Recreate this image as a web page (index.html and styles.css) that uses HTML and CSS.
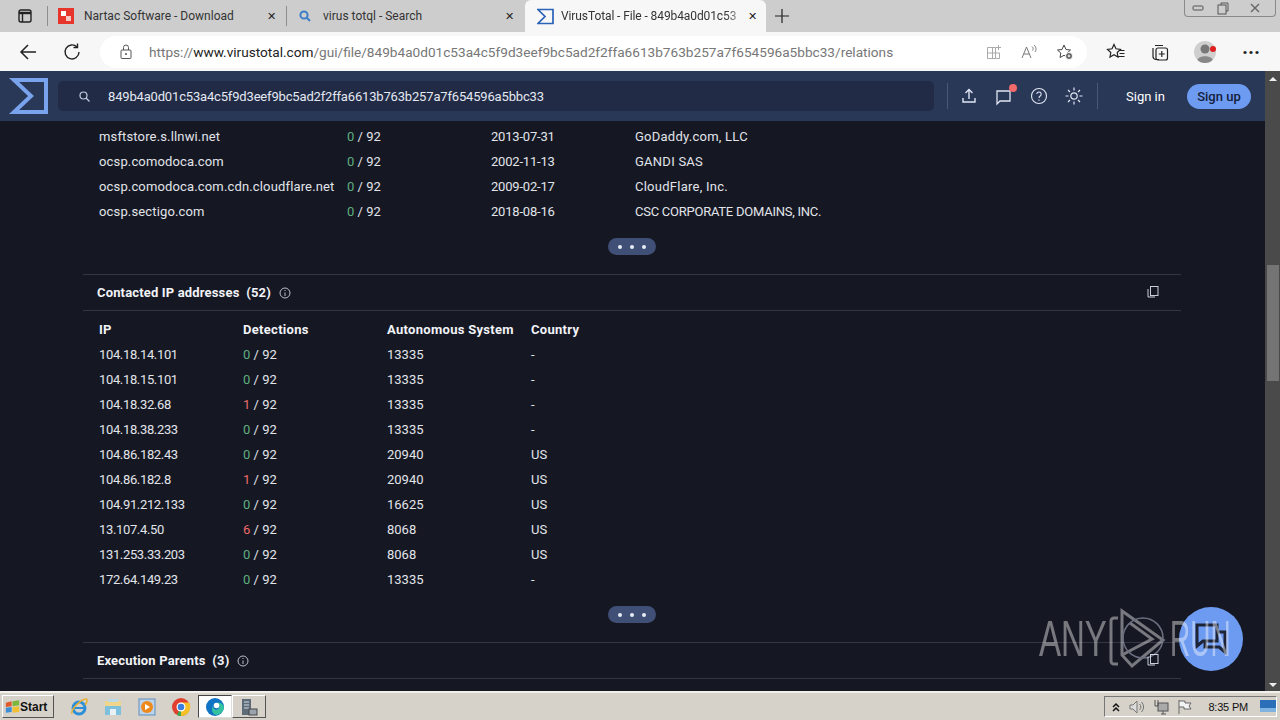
FILE: index.html
```html
<!DOCTYPE html>
<html lang="en">
<head>
    <meta charset="UTF-8">
    <title>VirusTotal - File</title>
    <link rel="stylesheet" href="styles.css">
</head>
<body>

    <!-- browser tabs -->
    <div class="tab-strip">
        <svg class="tab-actions" width="16" height="16" viewBox="0 0 16 16" fill="none" stroke="#222" stroke-width="1.4"><rect x="2" y="2" width="12" height="12" rx="2"/><path d="M2 5h12" stroke-width="2.4"/><path d="M5.5 4v10"/></svg>
        <div class="tab-sep"></div>
        <div class="tab">
            <svg width="16" height="16" viewBox="0 0 16 16"><rect width="16" height="16" fill="#e8352b"/><rect x="3" y="3" width="5" height="5" fill="#fff"/><rect x="8" y="8" width="5" height="5" fill="#f7c9c4"/></svg>
            <span class="tab-title">Nartac Software - Download</span>
            <span class="tab-close">&#10005;</span>
        </div>
        <div class="tab-sep"></div>
        <div class="tab tab-search">
            <svg width="16" height="16" viewBox="0 0 16 16" fill="none" stroke="#3a7fc8" stroke-width="2"><circle cx="7" cy="7" r="3.6"/><path d="M9.8 9.8 13 13"/></svg>
            <span class="tab-title">virus totql - Search</span>
            <span class="tab-close">&#10005;</span>
        </div>
        <div class="tab tab-active">
            <svg width="17" height="17" viewBox="0 0 34 34" fill="none" stroke="#2a62b8" stroke-width="3.4"><path d="M2 3h30v28H2l14-14z"/></svg>
            <span class="tab-title">VirusTotal - File - 849b4a0d01c53</span>
            <span class="tab-close">&#10005;</span>
        </div>
        <svg class="new-tab" width="16" height="16" viewBox="0 0 16 16" stroke="#222" stroke-width="1.2"><path d="M8 1v14M1 8h14"/></svg>
        <div class="window-buttons">
            <span class="win-btn"><svg width="12" height="8" viewBox="0 0 12 8" fill="none" stroke="#555"><rect x="1" y="2" width="10" height="4" rx="1"/></svg></span>
            <span class="win-btn"><svg width="14" height="13" viewBox="0 0 14 13" fill="none" stroke="#555"><rect x="2" y="3" width="8" height="9"/><path d="M5 3V1h7v8h-2"/></svg></span>
            <span class="win-btn win-close"><svg width="14" height="10" viewBox="0 0 14 10" fill="none" stroke="#666" stroke-width="1.4"><path d="M3 1l8 8M11 1 3 9"/></svg></span>
        </div>
    </div>

    <!-- address bar -->
    <div class="toolbar">
        <svg class="tool-icon" width="20" height="20" viewBox="0 0 20 20" fill="none" stroke="#222" stroke-width="1.5"><path d="M18 10H3M10 3l-7 7 7 7"/></svg>
        <svg class="tool-icon tool-reload" width="20" height="20" viewBox="0 0 20 20" fill="none" stroke="#222" stroke-width="1.4"><path d="M15 5a7 7 0 1 0 2 5"/><path d="M15.5 1.5V5.5h-4"/></svg>
        <div class="address">
            <svg width="14" height="16" viewBox="0 0 14 16" fill="none" stroke="#555"><rect x="2" y="6" width="10" height="8.5" rx="1"/><path d="M4.5 6V3.5a2.5 2.5 0 0 1 5 0V6"/><circle cx="7" cy="10" r=".6" fill="#555"/></svg>
            <span class="url">https://<b>www.virustotal.com</b>/gui/file/849b4a0d01c53a4c5f9d3eef9bc5ad2f2ffa6613b763b257a7f654596a5bbc33/relations</span>
            <svg class="addr-icon" width="16" height="16" viewBox="0 0 16 16" fill="none" stroke="#aaa"><path d="M1.5 3.5h8v11h-8zM6.5 3.5v11M1.5 9h12v5.5h-4M12.5 1v5M10 3.5h5"/></svg>
            <svg class="addr-icon" width="18" height="16" viewBox="0 0 18 16" fill="none" stroke="#777"><path d="M2 14 6.5 3 11 14M3.8 10h5.4M12 2.5c1.5 1 1.5 3 .5 4M14 1c2.5 2 2.5 5 1 7"/></svg>
            <svg class="addr-icon" width="18" height="18" viewBox="0 0 18 18" fill="none" stroke="#444"><path d="M8 2l2 4.5 4.5.5-3.3 3 .8 4.5L8 12.3 4 14.500 4.800 10 1.500 7 6 6.500z"/><circle cx="13" cy="13" r="3.5" fill="#555" stroke="#fff"/><path d="M11.5 13h3M13 11.5v3" stroke="#fff"/></svg>
        </div>
        <svg class="tool-icon" width="20" height="20" viewBox="0 0 20 20" fill="none" stroke="#222" stroke-width="1.2"><path d="M8 2.5l2 4.3 4.5.6-3.3 3.100.8 4.500-4-2.200-4 2.200.8-4.500L1.500 7.400 6 6.800zM13 8.500h5.500M13.500 11.500h5M12.500 14.500h6"/></svg>
        <svg class="tool-icon" width="20" height="20" viewBox="0 0 20 20" fill="none" stroke="#222" stroke-width="1.2"><rect x="6" y="6" width="11.5" height="12" rx="2"/><path d="M9 17.5H6a3 3 0 0 1-3-3V6M5 3.5h8M11.8 9v6M8.8 12h6"/></svg>
        <svg class="tool-icon" width="24" height="24" viewBox="0 0 24 24"><circle cx="11" cy="12" r="11" fill="#cfcfcf"/><circle cx="11" cy="9" r="4.5" fill="#777"/><path d="M3.5 20c1-5 14-5 15 0-3 4-12 4-15 0z" fill="#888"/><circle cx="19" cy="9" r="3" fill="#e02020"/></svg>
        <span class="tool-more">&middot;&middot;&middot;</span>
    </div>

    <!-- virustotal header and page -->
    <div class="viewport">
        <div class="page">
            <header class="vt-header">
                <svg class="vt-logo" width="40" height="36" viewBox="0 0 40 36" fill="none" stroke="#7aa3ee" stroke-width="4"><path d="M5 2h32v32H5l17-16z"/></svg>
                <div class="vt-search">
                    <svg width="13" height="13" viewBox="0 0 13 13" fill="none" stroke="#c3cbdd" stroke-width="1.2"><circle cx="5.5" cy="5.5" r="3.5"/><path d="M8 8l3.5 3.5"/></svg>
                    <span>849b4a0d01c53a4c5f9d3eef9bc5ad2f2ffa6613b763b257a7f654596a5bbc33</span>
                </div>
                <div class="vt-divider"></div>
                <div class="vt-icons">
                    <svg width="18" height="18" viewBox="0 0 18 18" fill="none" stroke="#dfe5f2" stroke-width="1.4"><path d="M9 12V3M5.5 6 9 2.5 12.5 6M3 11v4h12v-4"/></svg>
                    <span class="vt-chat">
                        <svg width="20" height="20" viewBox="0 0 20 20" fill="none" stroke="#dfe5f2" stroke-width="1.3"><path d="M3 5h13v10H6l-3 3z"/></svg>
                        <i class="vt-dot"></i>
                    </span>
                    <svg width="18" height="18" viewBox="0 0 18 18" fill="none" stroke="#dfe5f2" stroke-width="1.1"><circle cx="9" cy="9" r="7.5"/><path d="M6.8 7a2.2 2.2 0 1 1 3.4 2c-.8.5-1.200 1-1.200 2M9 12.500v1.200"/></svg>
                    <svg width="20" height="20" viewBox="0 0 20 20" fill="none" stroke="#dfe5f2" stroke-width="1.2"><circle cx="10" cy="10" r="3.2"/><path d="M10 1.500v3M10 15.500v3M1.500 10h3M15.500 10h3M4 4l2 2M14 14l2 2M16 4l-2 2M6 14l-2 2"/></svg>
                </div>
                <div class="vt-divider"></div>
                <span class="vt-signin">Sign in</span>
                <span class="vt-signup">Sign up</span>
            </header>

            <main class="content">
                <div class="table domains">
                    <div class="row"><span>msftstore.s.llnwi.net</span><span><em class="ok">0</em> / 92</span><span>2013-07-31</span><span>GoDaddy.com, LLC</span></div>
                    <div class="row"><span>ocsp.comodoca.com</span><span><em class="ok">0</em> / 92</span><span>2002-11-13</span><span>GANDI SAS</span></div>
                    <div class="row"><span>ocsp.comodoca.com.cdn.cloudflare.net</span><span><em class="ok">0</em> / 92</span><span>2009-02-17</span><span>CloudFlare, Inc.</span></div>
                    <div class="row"><span>ocsp.sectigo.com</span><span><em class="ok">0</em> / 92</span><span>2018-08-16</span><span class="caps">CSC CORPORATE DOMAINS, INC.</span></div>
                </div>
                <div class="more"><span class="more-pill"><i></i><i></i><i></i></span></div>

                <section class="section-head">
                    <h2>Contacted IP addresses&nbsp; (52)</h2>
                    <svg class="info" width="12" height="12" viewBox="0 0 12 12" fill="none" stroke="#b9bfcc"><circle cx="6" cy="6" r="5"/><path d="M6 5.5V9M6 3v1"/></svg>
                    <svg class="copy" width="12" height="12" viewBox="0 0 12 12" fill="none" stroke="#c9cedb"><rect x="3.5" y=".5" width="7.5" height="9"/><path d="M1 3v8h7"/></svg>
                </section>
                <div class="table ips">
                    <div class="row row-head"><span>IP</span><span>Detections</span><span>Autonomous System</span><span>Country</span></div>
                    <div class="row"><span>104.18.14.101</span><span><em class="ok">0</em> / 92</span><span>13335</span><span>-</span></div>
                    <div class="row"><span>104.18.15.101</span><span><em class="ok">0</em> / 92</span><span>13335</span><span>-</span></div>
                    <div class="row"><span>104.18.32.68</span><span><em class="bad">1</em> / 92</span><span>13335</span><span>-</span></div>
                    <div class="row"><span>104.18.38.233</span><span><em class="ok">0</em> / 92</span><span>13335</span><span>-</span></div>
                    <div class="row"><span>104.86.182.43</span><span><em class="ok">0</em> / 92</span><span>20940</span><span>US</span></div>
                    <div class="row"><span>104.86.182.8</span><span><em class="bad">1</em> / 92</span><span>20940</span><span>US</span></div>
                    <div class="row"><span>104.91.212.133</span><span><em class="ok">0</em> / 92</span><span>16625</span><span>US</span></div>
                    <div class="row"><span>13.107.4.50</span><span><em class="bad">6</em> / 92</span><span>8068</span><span>US</span></div>
                    <div class="row"><span>131.253.33.203</span><span><em class="ok">0</em> / 92</span><span>8068</span><span>US</span></div>
                    <div class="row"><span>172.64.149.23</span><span><em class="ok">0</em> / 92</span><span>13335</span><span>-</span></div>
                </div>
                <div class="more"><span class="more-pill"><i></i><i></i><i></i></span></div>

                <section class="section-head">
                    <h2>Execution Parents&nbsp; (3)</h2>
                    <svg class="info" width="12" height="12" viewBox="0 0 12 12" fill="none" stroke="#b9bfcc"><circle cx="6" cy="6" r="5"/><path d="M6 5.5V9M6 3v1"/></svg>
                    <svg class="copy" width="12" height="12" viewBox="0 0 12 12" fill="none" stroke="#c9cedb"><rect x="3.5" y=".5" width="7.5" height="9"/><path d="M1 3v8h7"/></svg>
                </section>
            </main>
        </div>

        <div class="scrollbar">
            <span class="arrow-up"></span>
            <div class="scroll-thumb"></div>
            <span class="arrow-down"></span>
        </div>

        <!-- chat bubble and recorder watermark sit over the page -->
        <div class="chat-bubble">
            <svg width="36" height="34" viewBox="0 0 36 34" fill="none" stroke="#1d2436" stroke-width="3"><path d="M4 3h20v16H10l-6 5z"/><path d="M24 10h8v20l-6-5H12v-6"/></svg>
        </div>
        <div class="watermark">
            <span class="wm-any">ANY</span>
            <svg class="wm-logo" width="58" height="66" viewBox="0 0 58 66" fill="none" stroke="#fff" stroke-width="3"><path d="M10 12H6a3 3 0 0 0-3 3v40a3 3 0 0 0 3 3h4"/><path d="M14 5v44l10 11 31-26z"/><path d="M14 49l30-16-22-16"/><circle cx="35" cy="32" r="20" stroke="#dfe6ff" stroke-width="1.5"/></svg>
            <span class="wm-run">RUN</span>
        </div>
    </div>

    <!-- windows taskbar -->
    <footer class="taskbar">
        <div class="start">
            <svg width="15" height="14" viewBox="0 0 18 16"><path d="M1 3l7-2v6l-7 1z" fill="#e2582a"/><path d="M9 1l8-1v6l-8 1z" fill="#7db63c"/><path d="M1 9l7-1v6l-7 1z" fill="#3c8ed6"/><path d="M9 8l8-1v7l-8 1z" fill="#f0c030"/></svg>
            <span>Start</span>
        </div>
        <div class="task-icon">
            <svg width="20" height="20" viewBox="0 0 20 20" fill="none"><circle cx="10" cy="11" r="6" stroke="#2d8fd8" stroke-width="3"/><path d="M5 11h10" stroke="#2d8fd8" stroke-width="2"/><path d="M3 17C1 13 12 2 17 2c2 0 1 4-1 6" stroke="#e8b030" stroke-width="1.5"/></svg>
        </div>
        <div class="task-icon">
            <svg width="20" height="20" viewBox="0 0 20 20"><path d="M2 4h16v14H2z" fill="#f0d58a"/><path d="M2 9h16v9H2z" fill="#7fc0dc"/><path d="M7 12h6v6H7z" fill="#e8f2f6"/><path d="M5 2h10v3H5z" fill="#bcd9e6"/></svg>
        </div>
        <div class="task-icon">
            <svg width="20" height="20" viewBox="0 0 20 20"><rect x="2" y="2" width="16" height="16" fill="#bcd3ea" stroke="#5f8fc0"/><circle cx="10" cy="10" r="6" fill="#ee8a1d"/><path d="M8 7l5 3-5 3z" fill="#fff"/></svg>
        </div>
        <div class="task-icon">
            <svg width="20" height="20" viewBox="0 0 20 20"><circle cx="10" cy="10" r="9" fill="#e0402f"/><path d="M10 10 17.8 14.5A9 9 0 0 1 6 18z" fill="#34a853"/><path d="M10 5.5h8A9 9 0 0 1 10 19z" fill="#f6c026"/><circle cx="10" cy="10" r="4.5" fill="#fff"/><circle cx="10" cy="10" r="3.3" fill="#3a7fe0"/></svg>
        </div>
        <div class="task-icon task-active">
            <svg width="20" height="20" viewBox="0 0 20 20"><circle cx="10" cy="10" r="9" fill="#1173c4"/><path d="M19 11c0-4-4-6-7-5 2 1 3 3 2 5-2 3-6 2-6-2-2 3-1 8 3 9 4 0 7-3 8-7z" fill="#35c2a0"/><circle cx="11.5" cy="8.5" r="2.8" fill="#fff"/></svg>
        </div>
        <div class="task-icon task-raised">
            <svg width="20" height="20" viewBox="0 0 20 20"><path d="M3 2h9v16H3z" fill="#5d6a78"/><path d="M5 5h5M5 8h5M5 11h5" stroke="#d6dde4"/><rect x="10" y="12" width="8" height="6" fill="#9aa3ad" stroke="#444"/></svg>
        </div>
        <div class="tray">
            <svg width="10" height="10" viewBox="0 0 10 10" fill="none" stroke="#111" stroke-width="1.5"><path d="M2 5l3-3 3 3M2 9l3-3 3 3"/></svg>
            <svg width="16" height="16" viewBox="0 0 16 16" fill="none" stroke="#777"><path d="M1 6h3l4-4v12l-4-4H1z" fill="#ddd"/><path d="M10.5 5a4 4 0 0 1 0 6M12.5 3a7 7 0 0 1 0 10"/></svg>
            <svg width="16" height="16" viewBox="0 0 16 16" fill="none" stroke="#555"><rect x="5" y="4" width="10" height="8" fill="#aaa"/><path d="M8 15h5M10 12v3M2 1v6h3V1"/></svg>
            <svg width="16" height="16" viewBox="0 0 16 16" fill="none" stroke="#666"><path d="M2 1v14M2 2h6v2h6l-2 3 2 3H7V8H2" fill="#f4f4f4"/></svg>
            <span class="clock">8:35 PM</span>
            <svg width="16" height="14" viewBox="0 0 16 14"><rect width="16" height="12" fill="#2a6fb8"/><rect y="8" width="16" height="4" fill="#7fb2e0"/></svg>
        </div>
    </footer>

</body>
</html>
```

FILE: styles.css
```css
* {
    box-sizing: border-box;
}
html, body {
    height: 100%;
}
body {
    margin: 0;
    display: flex;
    flex-direction: column;
    overflow: hidden;
    font-family: Roboto, "Liberation Sans", sans-serif;
    background-color: #151823;
}

/* tabs */
.tab-strip {
    position: relative;
    display: flex;
    align-items: center;
    height: 32px;
    flex: none;
    background-color: #cdcdcd;
    font-size: 12px;
    color: #333;
}
.tab-actions {
    margin: 0 14px 0 17px;
}
.tab-sep {
    width: 1px;
    height: 20px;
    background-color: #8e8e8e;
}
.tab {
    display: flex;
    align-items: center;
    width: 238px;
    height: 32px;
    padding: 0 10px;
}
.tab-search {
    padding-right: 11px;
}
.tab-active {
    width: 241px;
    padding: 0 9px 0 12px;
    background-color: #f7f7f7;
    border-radius: 6px 6px 0 0;
}
.tab-title {
    flex: 1;
    margin-left: 10px;
    white-space: nowrap;
    overflow: hidden;
}
.tab-active .tab-title {
    margin-left: 7px;
    letter-spacing: -0.1px;
    -webkit-mask-image: linear-gradient(to right, #000 88%, transparent 100%);
    mask-image: linear-gradient(to right, #000 88%, transparent 100%);
}
.tab-close {
    font-size: 11px;
    color: #222;
}
.new-tab {
    margin-left: 8px;
}
.window-buttons {
    position: absolute;
    top: 0;
    right: 4px;
    display: flex;
    height: 17px;
    border: 1px solid #8a8a8a;
    border-top: none;
    border-radius: 0 0 4px 4px;
}
.win-btn {
    display: flex;
    align-items: center;
    justify-content: center;
    width: 25px;
}
.win-close {
    width: 40px;
}

/* address bar */
.toolbar {
    display: flex;
    align-items: center;
    height: 39px;
    flex: none;
    padding-left: 18px;
    background-color: #f7f7f7;
}
.tool-icon {
    flex: none;
    margin-right: 24px;
}
.tool-reload {
    margin-right: 18px;
}
.address {
    display: flex;
    align-items: center;
    flex: none;
    width: 987px;
    height: 32px;
    margin-right: 19px;
    padding: 0 13px 0 19px;
    background-color: #fff;
    border-radius: 16px;
}
.url {
    flex: 1;
    margin-left: 16px;
    font-size: 13.64px;
    color: #777;
    white-space: nowrap;
    overflow: hidden;
}
.url b {
    font-weight: 400;
    color: #222;
}
.addr-icon {
    flex: none;
    margin-left: 18px;
}
.tool-more {
    font-size: 20px;
    font-weight: 700;
    color: #222;
}

/* page */
.viewport {
    position: relative;
    display: flex;
    flex: 1;
    min-height: 0;
}
.page {
    flex: 1;
    min-width: 0;
}
.vt-header {
    display: flex;
    align-items: center;
    height: 50px;
    padding-left: 9px;
    background-color: #2a3857;
    color: #fff;
}
.vt-logo {
    flex: none;
}
.vt-search {
    display: flex;
    align-items: center;
    gap: 17px;
    width: 876px;
    height: 30px;
    margin: 0 13px 0 9px;
    padding-left: 20px;
    background-color: #212b45;
    border-radius: 5px;
    font-size: 13px;
    letter-spacing: -0.17px;
    color: #e4e8f2;
}
.vt-divider {
    width: 1px;
    height: 26px;
    background-color: #4a5776;
}
.vt-icons {
    display: flex;
    align-items: center;
    gap: 16px;
    margin: 0 13px 0 12px;
}
.vt-chat {
    position: relative;
    display: flex;
}
.vt-dot {
    position: absolute;
    top: -2px;
    right: -3px;
    width: 8px;
    height: 8px;
    background-color: #f26a6a;
    border-radius: 50%;
}
.vt-signin {
    margin: 0 22px 0 28px;
    font-size: 13px;
}
.vt-signup {
    display: flex;
    align-items: center;
    justify-content: center;
    width: 64px;
    height: 25px;
    background-color: #6d9bf1;
    border-radius: 13px;
    font-size: 13px;
    font-weight: 500;
    color: #14203a;
}
.content {
    width: 1098px;
    margin-left: 83px;
    padding-top: 3px;
    font-size: 13px;
    color: #e2e4ea;
}
.table {
    padding-left: 16px;
}
.row {
    display: grid;
    height: 25px;
    align-items: center;
    white-space: nowrap;
}
.domains .row {
    grid-template-columns: 248px 144px 144px 1fr;
}
.domains .row span:nth-child(1) {
    letter-spacing: 0.15px;
}
.domains .row span:nth-child(3) {
    letter-spacing: -0.2px;
}
.domains .row span:nth-child(4) {
    letter-spacing: 0.25px;
}
.domains .row span.caps {
    letter-spacing: -0.25px;
}
.ips .row {
    grid-template-columns: 144px 144px 144px 1fr;
}
.ips .row span:nth-child(1) {
    letter-spacing: -0.35px;
}
.ips {
    margin-top: 6px;
}
.ips .row-head span:nth-child(n) {
    letter-spacing: 0.3px;
    font-weight: 700;
    color: #f2f3f7;
}
.row em {
    font-style: normal;
}
.ok {
    color: #5fae80;
}
.bad {
    color: #ee6a6a;
}
.more {
    display: flex;
    justify-content: center;
    height: 17px;
    margin: 14px 0 19px;
}
.more-pill {
    display: flex;
    align-items: center;
    justify-content: center;
    gap: 8px;
    width: 48px;
    background-color: #3f4f75;
    border-radius: 9px;
}
.more-pill i {
    width: 4px;
    height: 4px;
    background-color: #e8ecf5;
    border-radius: 50%;
}
.section-head {
    display: flex;
    align-items: center;
    height: 37px;
    padding: 0 22px 0 14px;
    border-top: 1px solid #343743;
    border-bottom: 1px solid #343743;
}
.section-head h2 {
    margin: 0 8px 0 0;
    font-size: 13px;
    font-weight: 700;
    letter-spacing: 0.16px;
    color: #f2f3f7;
}
.copy {
    margin-left: auto;
    margin-bottom: 2px;
}

/* scrollbar */
.scrollbar {
    display: flex;
    flex: none;
    flex-direction: column;
    align-items: center;
    width: 15px;
    background-color: #4a4a4a;
}
.arrow-up, .arrow-down {
    width: 0;
    height: 0;
    margin-top: 6px;
    border-left: 4px solid transparent;
    border-right: 4px solid transparent;
    border-bottom: 4px solid #eee;
}
.arrow-down {
    margin: auto 0 4px;
    border-bottom: none;
    border-top: 4px solid #eee;
}
.scroll-thumb {
    width: 12px;
    height: 116px;
    margin-top: 184px;
    background-color: #747474;
}

/* overlays */
.chat-bubble {
    position: absolute;
    left: 1179px;
    top: 536px;
    display: flex;
    align-items: center;
    justify-content: center;
    width: 64px;
    height: 64px;
    background-color: #6e9bf2;
    border-radius: 50%;
}
.watermark {
    position: absolute;
    left: 1039px;
    top: 535px;
    display: flex;
    align-items: center;
    height: 66px;
    font-size: 50px;
    font-family: "Liberation Sans", sans-serif;
    color: #fff;
    opacity: 0.42;
}
.watermark span {
    display: inline-block;
    transform-origin: left center;
    white-space: nowrap;
}
.wm-any {
    width: 69px;
    transform: scaleX(0.66);
}
.wm-logo {
    flex: none;
}
.wm-run {
    margin-left: 4px;
    transform: scaleX(0.56);
}

/* taskbar */
.taskbar {
    display: flex;
    align-items: center;
    height: 29px;
    flex: none;
    padding-left: 2px;
    background-color: #d6d2ca;
    border-top: 2px solid #f2f0ea;
    font-family: "Liberation Sans", sans-serif;
}
.start {
    display: flex;
    align-items: center;
    gap: 0;
    width: 52px;
    height: 23px;
    margin-right: 8px;
    padding-left: 2px;
    background-color: #d6d2ca;
    border: 1px solid;
    border-color: #fff #555 #555 #fff;
    font-size: 12px;
    font-weight: 700;
    color: #111;
}
.task-icon {
    display: flex;
    align-items: center;
    justify-content: center;
    width: 34px;
    height: 23px;
}
.task-active {
    background-color: #fff;
    border: 1px solid;
    border-color: #444 #ddd #ddd #444;
}
.task-raised {
    border: 1px solid;
    border-color: #fff #555 #555 #fff;
}
.tray {
    display: flex;
    align-items: center;
    gap: 8px;
    height: 21px;
    margin-left: auto;
    margin-right: 3px;
    padding: 0 0 0 6px;
    border: 1px solid;
    border-color: #777 #fff #fff #777;
    font-size: 11px;
    color: #111;
}
.clock {
    margin: 0 4px 0 7px;
    letter-spacing: -0.2px;
}
```
